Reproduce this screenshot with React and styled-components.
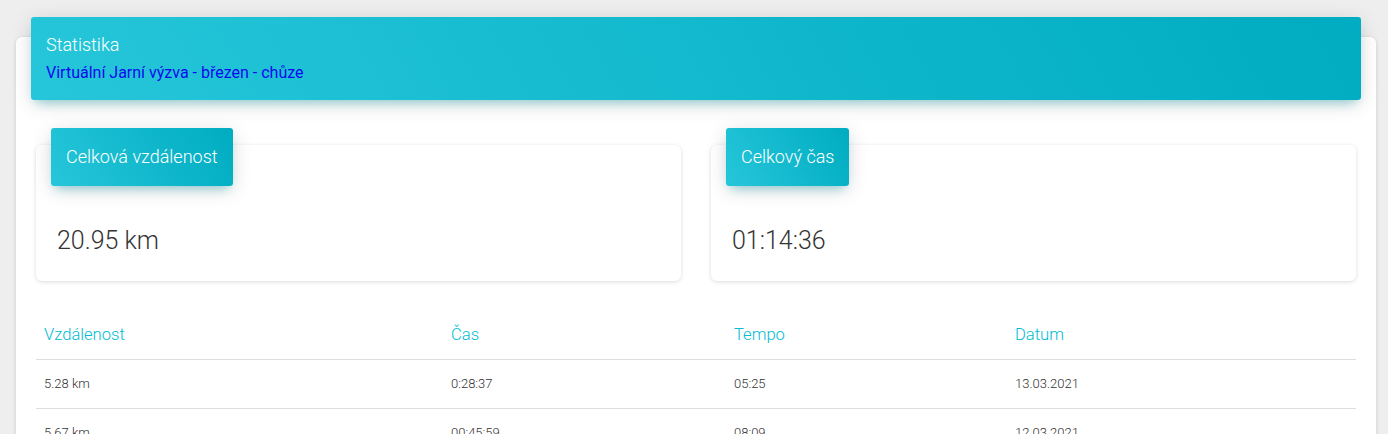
import React from 'react';
import styled, {createGlobalStyle} from 'styled-components';

const GlobalStyle = createGlobalStyle`
	body {
		margin: 0;
		background: #eeeeee;
		font-family: Roboto, "Helvetica Neue", Arial, sans-serif;
		font-weight: 300;
		overflow: hidden;
	}
`;

const Page = styled.div`
	padding: 37px 12px 0 16px;
`;

const Card = styled.div`
	background: #fff;
	border-radius: 6px;
	box-shadow: 0 1px 4px 0 rgba(0, 0, 0, 0.14);
	padding: 0 20px 20px;
`;

const CardHeader = styled.div`
	margin: 0 -5px;
	position: relative;
	top: -20px;
	margin-bottom: -20px;
	padding: 15px 15px 17px;
	border-radius: 3px;
	background: linear-gradient(60deg, #26c6da, #00acc1);
	box-shadow: 0 4px 20px 0 rgba(0, 0, 0, 0.14), 0 7px 10px -5px rgba(0, 172, 193, 0.4);
`;

const Title = styled.h4`
	margin: 0 0 6px;
	font-size: 18px;
	font-weight: 300;
	line-height: 25px;
	color: #fff;
`;

const Subtitle = styled.a`
	display: block;
	font-size: 16px;
	font-weight: 400;
	line-height: 20px;
	color: #0a0aee;
	text-decoration: none;
`;

const StatGrid = styled.div`
	display: grid;
	grid-template-columns: 1fr 1fr;
	gap: 30px;
	margin-top: 45px;
`;

const StatCard = styled.div`
	background: #fff;
	border-radius: 6px;
	box-shadow: 0 1px 4px 0 rgba(0, 0, 0, 0.14);
	padding: 0 15px 26px;
	height: 136px;
	box-sizing: border-box;
`;

const Badge = styled.div`
	display: inline-block;
	margin-top: -17px;
	padding: 0 15px;
	height: 58px;
	line-height: 58px;
	font-size: 18px;
	font-weight: 300;
	color: #fff;
	border-radius: 3px;
	background: linear-gradient(60deg, #26c6da, #00acc1);
	box-shadow: 0 4px 20px 0 rgba(0, 0, 0, 0.14), 0 7px 10px -5px rgba(0, 172, 193, 0.4);
`;

const StatValue = styled.div`
	margin-top: 40px;
	padding-left: 6px;
	font-size: 25px;
	line-height: 30px;
	font-weight: 300;
	color: #333;
`;

const Table = styled.table`
	width: 100%;
	margin-top: 30px;
	border-collapse: collapse;
	table-layout: fixed;
`;

const Th = styled.th`
	text-align: left;
	padding: 12px 8px;
	font-size: 16.6px;
	line-height: 24px;
	font-weight: 300;
	color: #00bcd4;
	border-bottom: 1px solid #dddddd;
`;

const Td = styled.td`
	padding: 12px 8px;
	font-size: 13px;
	line-height: 24px;
	font-weight: 300;
	color: #333;
	border-bottom: 1px solid #dddddd;
`;

const columns = [
	{label: 'Vzdálenost', width: 407},
	{label: 'Čas', width: 283},
	{label: 'Tempo', width: 281},
	{label: 'Datum', width: 349},
];

const rows = [
	['5.28 km', '0:28:37', '05:25', '13.03.2021'],
	['5.67 km', '00:45:59', '08:09', '12.03.2021'],
	['4.80 km', '00:30:12', '06:17', '10.03.2021'],
	['5.20 km', '00:29:48', '05:44', '08.03.2021'],
];

const stats = [
	{label: 'Celková vzdálenost', value: '20.95 km'},
	{label: 'Celkový čas', value: '01:14:36'},
];

export default function App() {
	return (
		<Page>
			<GlobalStyle/>
			<Card>
				<CardHeader>
					<Title>Statistika</Title>
					<Subtitle href="#">Virtuální Jarní výzva - březen - chůze</Subtitle>
				</CardHeader>
				<StatGrid>
					{stats.map(s => (
						<StatCard key={s.label}>
							<Badge>{s.label}</Badge>
							<StatValue>{s.value}</StatValue>
						</StatCard>
					))}
				</StatGrid>
				<Table>
					<colgroup>
						{columns.map(c => <col key={c.label} style={{width: c.width}}/>)}
					</colgroup>
					<thead>
						<tr>
							{columns.map(c => <Th key={c.label}>{c.label}</Th>)}
						</tr>
					</thead>
					<tbody>
						{rows.map((r, i) => (
							<tr key={i}>
								{r.map((v, j) => <Td key={j}>{v}</Td>)}
							</tr>
						))}
					</tbody>
				</Table>
			</Card>
		</Page>
	);
}
